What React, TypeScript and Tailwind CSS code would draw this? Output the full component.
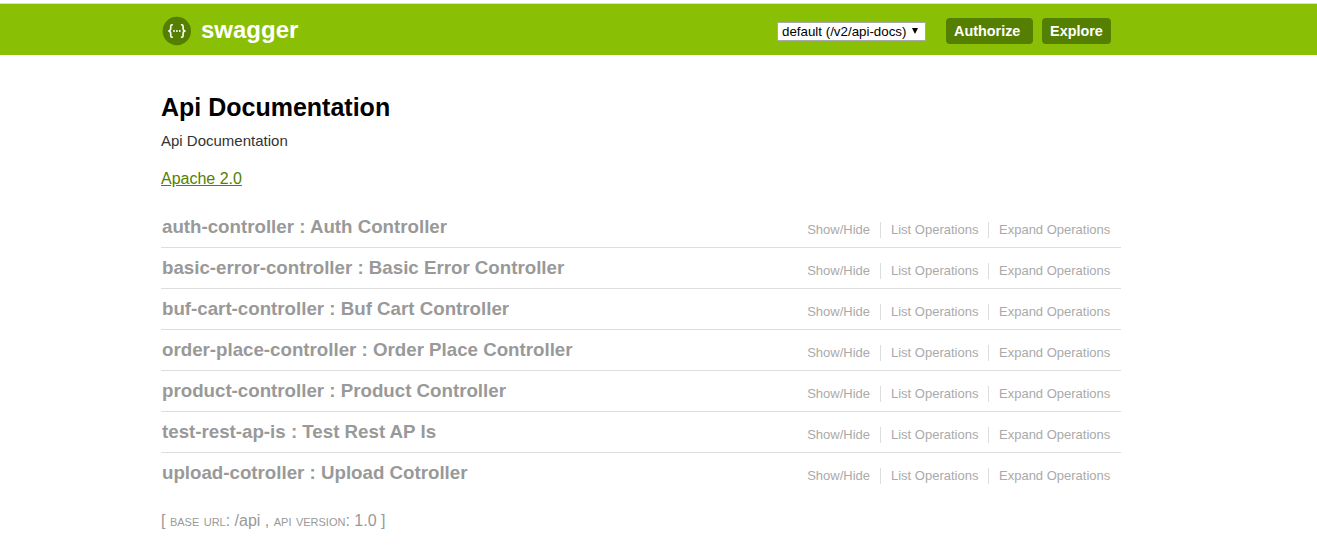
const resources = [
  { name: 'auth-controller', title: 'Auth Controller' },
  { name: 'basic-error-controller', title: 'Basic Error Controller' },
  { name: 'buf-cart-controller', title: 'Buf Cart Controller' },
  { name: 'order-place-controller', title: 'Order Place Controller' },
  { name: 'product-controller', title: 'Product Controller' },
  { name: 'test-rest-ap-is', title: 'Test Rest AP Is' },
  { name: 'upload-cotroller', title: 'Upload Cotroller' },
];

function Logo() {
  return (
    <svg width="30" height="30" viewBox="0 0 30 30" className="shrink-0">
      <circle cx="14.8" cy="15" r="14.2" fill="#547f00" />
      <g fill="none" stroke="#fff" strokeWidth="1.6">
        <path d="M10.9 8.8H10.2Q8.7 8.8 8.7 10.2V12.8Q8.7 14.8 6.3 15Q8.7 15.2 8.7 17.2V19.8Q8.7 21.2 10.2 21.2H10.9" />
        <path d="M18.9 8.8H19.6Q21.1 8.8 21.1 10.2V12.8Q21.1 14.8 23.5 15Q21.1 15.2 21.1 17.2V19.8Q21.1 21.2 19.6 21.2H18.9" />
      </g>
      <g fill="#fff">
        <circle cx="12" cy="15" r="0.95" />
        <circle cx="14.9" cy="15" r="0.95" />
        <circle cx="17.8" cy="15" r="0.95" />
      </g>
    </svg>
  );
}

function Header() {
  return (
    <header className="mt-[3px] h-[52px] border-t border-[#d9d9e0] bg-[#89bf04]">
      <div className="ml-[161px] flex h-[51px] w-[960px] items-start">
        <a href="#" className="flex items-start pt-3 pl-px text-white">
          <Logo />
          <span className="ml-[9px] text-2xl leading-7 font-bold">swagger</span>
        </a>
        <div className="mr-[10px] ml-auto flex items-start pt-3.5">
          <button className="mt-1 flex h-[19px] w-[149px] items-center border border-[#a9a9a9] bg-white pl-1 text-[13.333px] leading-4 whitespace-nowrap text-black">
            default (/v2/api-docs)
            <svg width="6" height="6" viewBox="0 0 6 6" className="mb-px ml-1.5">
              <path d="M0 0H6L3 6Z" fill="#000" />
            </svg>
          </button>
          <button className="ml-5 h-[26px] w-[87px] rounded-[4px] bg-[#547f00] pl-2 text-left text-[14.4px] leading-[26px] font-bold text-white">
            Authorize
          </button>
          <button className="ml-[9px] h-[26px] w-[69px] rounded-[4px] bg-[#547f00] text-center text-[14.4px] leading-[26px] font-bold text-white">
            Explore
          </button>
        </div>
      </div>
    </header>
  );
}

function Resource({ name, title }: { name: string; title: string }) {
  return (
    <li className="flex h-[41px] items-start justify-between border-b border-[#dddddd] pl-px last:border-transparent">
      <h2 className="pt-2 text-[18.72px] leading-6 font-bold text-[#999999]">
        {name} : {title}
      </h2>
      <div className="mt-[15px] flex h-4 pr-px text-[13px] leading-4 text-[#aaaaaa]">
        <a href="#" className="border-r border-[#dddddd] px-2.5">Show/Hide</a>
        <a href="#" className="w-[108px] border-r border-[#dddddd] pl-2.5 whitespace-nowrap">List Operations</a>
        <a href="#" className="w-[131px] pl-2.5 whitespace-nowrap">Expand Operations</a>
      </div>
    </li>
  );
}

export default function App() {
  return (
    <div className="h-[552px] overflow-hidden bg-white font-['Liberation_Sans',Arial,sans-serif]">
      <Header />
      <main className="ml-[161px] w-[960px]">
        <h1 className="pt-[37px] text-[25px] leading-[30px] font-bold text-black">Api Documentation</h1>
        <p className="mt-[9px] text-[15px] leading-5 text-[#333333]">Api Documentation</p>
        <a href="#" className="mt-[18px] block w-fit text-base leading-5 text-[#547f00] underline">Apache 2.0</a>
        <ul className="mt-[18px]">
          {resources.map((resource) => (
            <Resource key={resource.name} {...resource} />
          ))}
        </ul>
        <footer className="mt-[17px] text-base leading-5 text-[#999999]">
          [ <span className="[font-variant:small-caps]">base url</span>: /api ,{' '}
          <span className="[font-variant:small-caps]">api version</span>: 1.0 ]
        </footer>
      </main>
    </div>
  );
}
